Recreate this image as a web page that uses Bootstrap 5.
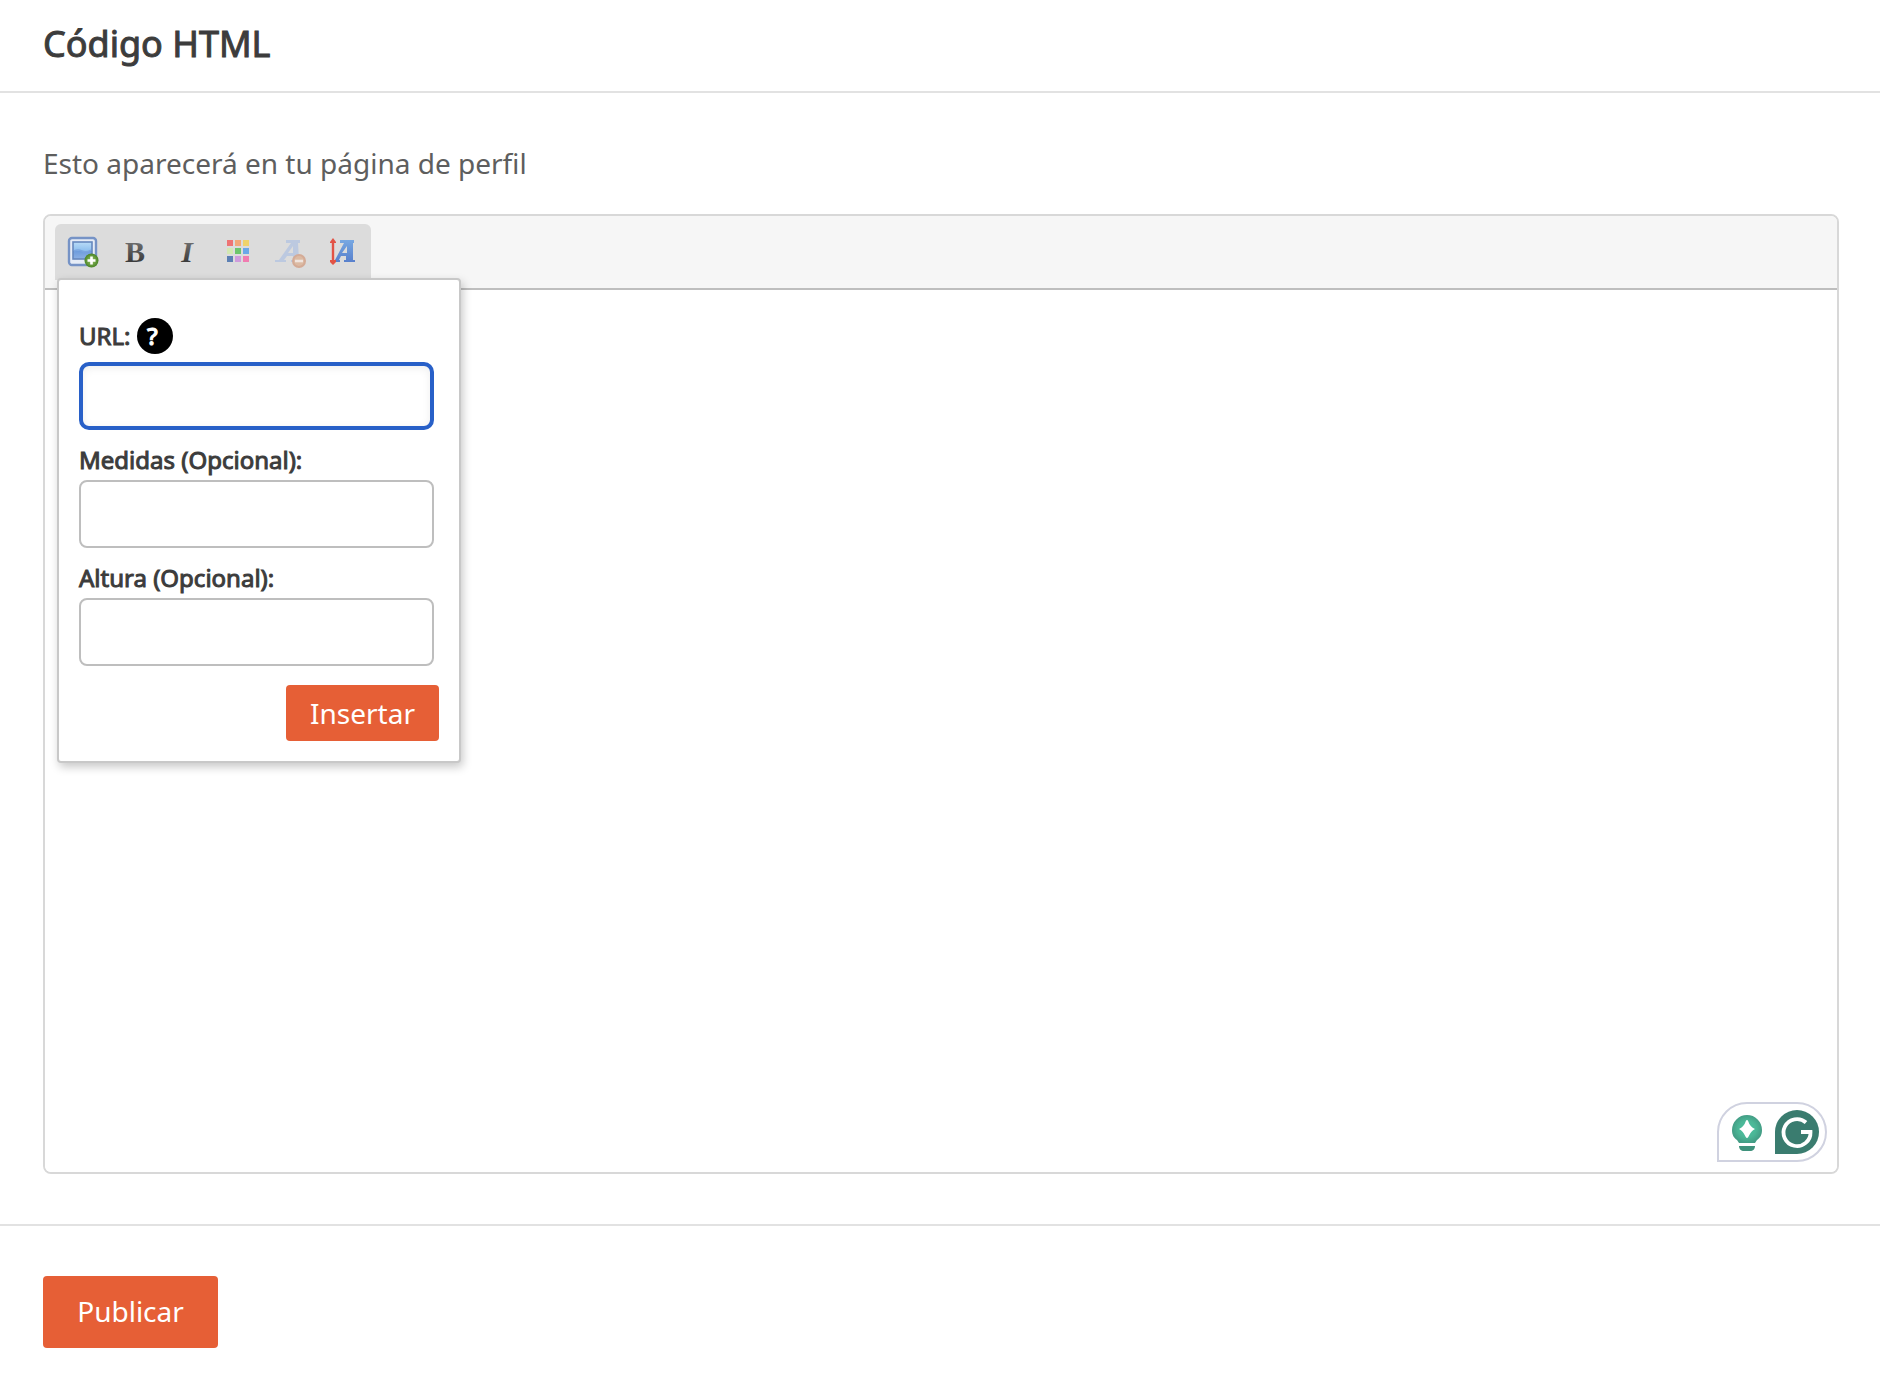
<!DOCTYPE html>
<html lang="es">
<head>
<meta charset="utf-8">
<meta name="viewport" content="width=device-width, initial-scale=1">
<title>Código HTML</title>
<link href="https://cdn.jsdelivr.net/npm/bootstrap@5.3.0/dist/css/bootstrap.min.css" rel="stylesheet">
<style>
  body { font-family: "Noto Sans", sans-serif; color: #3c3c3c; background: #fff; }
  .strong-text { font-weight: 400; color: #3c3c3c; -webkit-text-stroke: 1px #3c3c3c; }
  .page-head { padding: 16px 43px 20px; border-bottom: 2px solid #e2e2e2; }
  .page-head h1 { font-size: 36px; line-height: 55px; }
  .page-body { padding: 48px 41px 50px 43px; }
  .intro { font-size: 28px; line-height: 44px; margin-bottom: 29px; color: #5e5e5e; }
  .editor { border: 2px solid #d8d8d8; border-radius: 8px; }
  .editor-bar { height: 74px; padding: 8px 10px 0; background: #f6f6f6; border-bottom: 2px solid #bebebe; border-radius: 6px 6px 0 0; }
  .tool-group { padding: 0 2px; height: 56px; background: #dcdcdc; border-radius: 6px 6px 0 0; }
  .tool-group .btn { width: 52px; height: 56px; padding: 0; border: 0; }
  .editor textarea { height: 882px; border: 0; resize: none; border-radius: 0 0 6px 6px; font-size: 24px; }
  .insert-panel { left: 12px; top: 62px; width: 404px; padding: 38px 20px 20px; background: #fff; border: 2px solid #c8c8c8; border-radius: 4px; box-shadow: 2px 4px 10px rgba(0,0,0,.22); z-index: 5; }
  .insert-panel label { font-size: 24px; line-height: 36px; }
  .insert-panel .field-label { display: block; margin: 12px 0 2px; }
  .insert-panel .form-control { width: 355px; height: 68px; border: 2px solid #bebebe; border-radius: 8px; font-size: 24px; }
  .insert-panel .url-box { border: 4px solid #2860c8; border-radius: 10px; box-shadow: inset 0 2px 8px rgba(0,0,0,.07); }
  .url-row { gap: 7px; }
  .panel-actions { margin-top: 19px; }
  .help-btn { width: 36px; height: 36px; padding: 0 6px 0 0; border: 0; border-radius: 50%; background: #000; color: #fff; font-size: 24px; line-height: 36px; font-weight: 500; -webkit-text-stroke: 1px #fff; }
  .btn-orange { --bs-btn-color: #fff; --bs-btn-bg: #e65f36; --bs-btn-hover-color: #fff; --bs-btn-hover-bg: #d4532c; border: 0; border-radius: 4px; font-size: 28px; }
  .btn-insert { width: 153px; height: 56px; padding: 0; }
  .btn-publish { width: 175px; height: 72px; padding: 0 0 2px; }
  .assistant { right: 10px; bottom: 10px; width: 110px; height: 60px; border: 2px solid #d0d2e0; border-radius: 30px 30px 30px 0; background: #fff; padding: 0 6px 0 11px; }
  .page-foot { padding: 50px 43px 44px; border-top: 2px solid #e2e2e2; }
</style>
<script src="https://cdn.jsdelivr.net/npm/bootstrap@5.3.0/dist/js/bootstrap.bundle.min.js"></script>
</head>
<body>
<header class="page-head">
  <h1 class="strong-text m-0">Código HTML</h1>
</header>
<main class="page-body">
  <p class="intro">Esto aparecerá en tu página de perfil</p>
  <div class="editor position-relative">
    <div class="editor-bar d-flex align-items-start" role="toolbar" aria-label="Formato">
      <div class="tool-group d-flex align-items-start">
        <button type="button" class="btn d-flex align-items-center justify-content-center" aria-label="Insertar imagen">
          <svg width="32" height="32" viewBox="0 0 32 32">
            <defs>
              <linearGradient id="sky" x1="0" y1="0" x2="0" y2="1"><stop offset="0" stop-color="#b9dcf7"/><stop offset=".5" stop-color="#8fc0ee"/><stop offset=".55" stop-color="#6f9ddd"/><stop offset="1" stop-color="#8cb0e4"/></linearGradient>
              <radialGradient id="leaf"><stop offset="0" stop-color="#9cc46a"/><stop offset="1" stop-color="#4a8526"/></radialGradient>
            </defs>
            <rect x="2" y="2" width="27" height="27" rx="3" fill="#e6ecf6" stroke="#7693c6" stroke-width="2.4"/>
            <rect x="6" y="6" width="19" height="17" fill="url(#sky)" stroke="#6688bd" stroke-width="1.6"/>
            <path d="M7 15q4-2 8 0t9-1" fill="none" stroke="#7ba5e0" stroke-width="1.4"/>
            <circle cx="24.5" cy="24.5" r="7" fill="url(#leaf)"/>
            <path d="M24.5 20.5v8M20.5 24.5h8" stroke="#fff" stroke-width="2.6"/>
          </svg>
        </button>
        <button type="button" class="btn d-flex align-items-center justify-content-center" aria-label="Negrita">
          <svg width="32" height="32" viewBox="0 0 32 32">
            <defs><linearGradient id="ink" x1="0" y1="0" x2="0" y2="1"><stop offset="0" stop-color="#808080"/><stop offset="1" stop-color="#2c2c2c"/></linearGradient></defs>
            <text x="16" y="26" text-anchor="middle" font-family="Liberation Serif, serif" font-weight="700" font-size="30" fill="url(#ink)">B</text>
          </svg>
        </button>
        <button type="button" class="btn d-flex align-items-center justify-content-center" aria-label="Cursiva">
          <svg width="32" height="32" viewBox="0 0 32 32">
            <text x="16" y="26" text-anchor="middle" font-family="Liberation Serif, serif" font-weight="700" font-style="italic" font-size="30" fill="url(#ink)">I</text>
          </svg>
        </button>
        <button type="button" class="btn d-flex align-items-center justify-content-center" aria-label="Color">
          <svg width="32" height="32" viewBox="0 0 32 32">
            <path fill="#ee7474" d="M4 4h6v6H4z"/><path fill="#f2a878" d="M12 4h6v6h-6z"/><path fill="#efd36c" d="M20 4h6v6h-6z"/>
            <path fill="#d3e8b2" d="M4 12h6v6H4z"/><path fill="#6cc66c" d="M12 12h6v6h-6z"/><path fill="#6aa8e8" d="M20 12h6v6h-6z"/>
            <path fill="#5c80b4" d="M4 20h6v6H4z"/><path fill="#cf9cdc" d="M12 20h6v6h-6z"/><path fill="#f07cb0" d="M20 20h6v6h-6z"/>
          </svg>
        </button>
        <button type="button" class="btn d-flex align-items-center justify-content-center" aria-label="Quitar formato">
          <svg width="32" height="32" viewBox="0 0 32 32" opacity=".8">
            <path d="M11 4h14v3h-2l1 17h3v2H16v-2h2v-4h-6l-3 4h2v2H0v-2h4L16 7h-5zM18 10l-5 7h5z" fill="#b5c5e2" fill-rule="evenodd"/>
            <circle cx="24" cy="25" r="6" fill="#dcb296" stroke="#d39f85" stroke-width="2"/>
            <path d="M20 25h8" stroke="#f6e8e0" stroke-width="2.6"/>
          </svg>
        </button>
        <button type="button" class="btn d-flex align-items-center justify-content-center" aria-label="Tamaño de letra">
          <svg width="32" height="32" viewBox="0 0 32 32">
            <defs><linearGradient id="blueA" x1="0" y1="0" x2="0" y2="1"><stop offset="0" stop-color="#78a8e2"/><stop offset="1" stop-color="#5880cc"/></linearGradient></defs>
            <path d="M13 4h14v3h-1v17h2v2H17v-2h2v-4h-5l-2 4h1v2H6v-2h2l9-17h-4zM20 10l-5 7h5z" fill="url(#blueA)" fill-rule="evenodd"/>
            <path d="M6 5v22" stroke="#e25345" stroke-width="2.4"/>
            <path d="M6 2l3 4v1H3V6zM6 29l3-3v-2H3v2z" fill="#e25345"/>
          </svg>
        </button>
      </div>
    </div>
    <textarea class="form-control shadow-none" aria-label="Código HTML"></textarea>

    <form class="insert-panel position-absolute">
      <div class="url-row d-flex align-items-center mb-2">
        <label class="strong-text" for="url">URL:</label>
        <button type="button" class="help-btn" aria-label="Ayuda">?</button>
      </div>
      <input id="url" type="text" class="form-control url-box">
      <label class="strong-text field-label" for="medidas">Medidas (Opcional):</label>
      <input id="medidas" type="text" class="form-control">
      <label class="strong-text field-label" for="altura">Altura (Opcional):</label>
      <input id="altura" type="text" class="form-control">
      <div class="panel-actions d-flex justify-content-end">
        <button type="button" class="btn btn-orange btn-insert">Insertar</button>
      </div>
    </form>

    <div class="assistant position-absolute d-flex align-items-center justify-content-between">
      <svg width="34" height="44" viewBox="0 0 34 44">
        <defs><radialGradient id="glow"><stop offset="0" stop-color="#4cc3a3"/><stop offset=".6" stop-color="#4bb696"/><stop offset="1" stop-color="#439d85"/></radialGradient></defs>
        <path d="M17 5a15 15 0 0 1 15 15c0 5-2 8-5 10l-2 3H9l-2-3c-3-2-5-5-5-10A15 15 0 0 1 17 5z" fill="url(#glow)"/>
        <path d="M17 10c2 0 1 6 8 9-6 3-6 9-8 9s-2-6-8-9c7-3 6-9 8-9z" fill="#fff"/>
        <path d="M9 36h16c0 3-2 5-5 5h-6c-3 0-5-2-5-5z" fill="#3f927c"/>
      </svg>
      <svg width="44" height="44" viewBox="0 0 44 44">
        <path d="M22 0a22 22 0 0 1 0 44H0V22A22 22 0 0 1 22 0z" fill="#3a7c6f"/>
        <path d="M31 12.500A13.500 13.500 0 1 0 35.500 22H26" fill="none" stroke="#fff" stroke-width="3.800"/>
      </svg>
    </div>
  </div>
</main>
<footer class="page-foot">
  <button type="submit" class="btn btn-orange btn-publish">Publicar</button>
</footer>
</body>
</html>
